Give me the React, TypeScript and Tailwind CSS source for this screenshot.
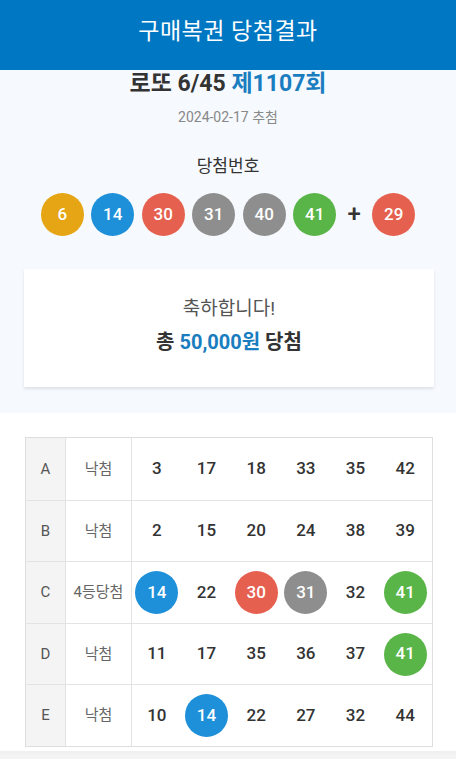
import React from 'react';

type BallColor = 'yellow' | 'blue' | 'red' | 'gray' | 'green';

const ballClass: Record<BallColor, string> = {
    yellow: 'bg-[#e5a514]',
    blue: 'bg-[#1e8fd9]',
    red: 'bg-[#e6604f]',
    gray: 'bg-[#8e8e8e]',
    green: 'bg-[#59b548]',
};

const colorOf = (n: number): BallColor => {
    if (n <= 10) return 'yellow';
    if (n <= 20) return 'blue';
    if (n <= 30) return 'red';
    if (n <= 40) return 'gray';
    return 'green';
};

const winning = [6, 14, 30, 31, 40, 41];
const bonus = 29;

const rows = [
    { label: 'A', result: '낙첨', nums: [3, 17, 18, 33, 35, 42] },
    { label: 'B', result: '낙첨', nums: [2, 15, 20, 24, 38, 39] },
    { label: 'C', result: '4등당첨', nums: [14, 22, 30, 31, 32, 41] },
    { label: 'D', result: '낙첨', nums: [11, 17, 35, 36, 37, 41] },
    { label: 'E', result: '낙첨', nums: [10, 14, 22, 27, 32, 44] },
];

const Ball = ({ n }: { n: number }) => (
    <div className={`w-[43px] h-[43px] rounded-full flex items-center justify-center text-white text-[17px] font-medium ${ballClass[colorOf(n)]}`}>
        {n}
    </div>
);

export default function App() {
    return (
        <div className="w-[456px] h-[759px] overflow-hidden bg-white text-[#333]" style={{ fontFamily: "Roboto, 'Noto Sans CJK KR', sans-serif" }}>
            {/* Header */}
            <div className="h-[70px] bg-[#0077c2] flex items-center justify-center">
                <span className="text-white text-[23px] tracking-[0.5px] -mt-[6px]">구매복권 당첨결과</span>
            </div>

            {/* Result summary */}
            <div className="bg-[#f6f9fd] flex flex-col items-center pt-[1px] pb-[26px]">
                <div className="text-[23px] font-bold leading-[28px] mt-[-1px]">
                    로또 6/45 <span className="text-[#1a7dc0]">제1107회</span>
                </div>
                <div className="text-[14px] text-[#888] mt-[9px] leading-[20px]">2024-02-17 추첨</div>

                <div className="text-[17px] text-[#333] mt-[27px] leading-[24px]">당첨번호</div>
                <div className="flex items-center mt-[15px]">
                    <div className="flex gap-[7.5px]">
                        {winning.map((n) => (
                            <Ball key={n} n={n} />
                        ))}
                    </div>
                    <div className="w-[36px] text-center text-[24px] leading-none font-medium text-[#333] -mt-[2px]">+</div>
                    <Ball n={bonus} />
                </div>

                {/* Prize card */}
                <div className="w-[410px] h-[118px] bg-white mt-[33px] ml-[2px] shadow-[0_2px_3px_rgba(0,0,0,0.10)] flex flex-col items-center justify-center">
                    <div className="text-[19px] text-[#555] leading-[26px] -mt-[4px]">축하합니다!</div>
                    <div className="text-[20px] font-bold leading-[28px] mt-[6px]">
                        총 <span className="text-[#1a7dc0]">50,000원</span> 당첨
                    </div>
                </div>
            </div>

            {/* Ticket table */}
            <div className="pl-[25px] pr-[23px] pt-[24px] bg-white">
                <div className="border border-[#dedede]">
                    {rows.map((r, i) => (
                        <div key={r.label} className={`flex h-[61.6px] ${i > 0 ? 'border-t border-[#e3e3e3]' : ''}`}>
                            <div className="w-[40px] bg-[#f4f4f4] border-r border-[#e3e3e3] flex items-center justify-center text-[15px] text-[#555]">
                                {r.label}
                            </div>
                            <div className="w-[66px] border-r border-[#e3e3e3] flex items-center justify-center text-[15px] text-[#666]">
                                {r.result}
                            </div>
                            <div className="flex-1 grid grid-cols-6 items-center pr-[2px]">
                                {r.nums.map((n, j) => (
                                    <div key={j} className="flex items-center justify-center">
                                        {winning.includes(n) ? (
                                            <Ball n={n} />
                                        ) : (
                                            <span className="text-[17px] font-medium text-[#333]">{n}</span>
                                        )}
                                    </div>
                                ))}
                            </div>
                        </div>
                    ))}
                </div>
            </div>
            <div className="mt-[4px] h-[12px] bg-gradient-to-b from-[#f0f0f0] to-[#f8f8f8]" />
        </div>
    );
}
